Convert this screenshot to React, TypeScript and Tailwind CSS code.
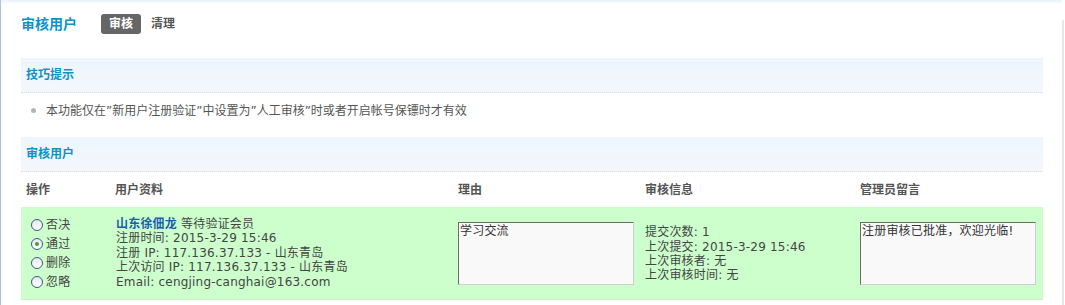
const FONT = "font-['DejaVu_Sans','Noto_Sans_CJK_SC',sans-serif]";

const columns = [
  { title: '操作', width: 'w-[89px]' },
  { title: '用户资料', width: 'w-[343px]' },
  { title: '理由', width: 'w-[187px]' },
  { title: '审核信息', width: 'w-[215px]' },
  { title: '管理员留言', width: 'flex-1' },
];

const actions = [
  { label: '否决', checked: false },
  { label: '通过', checked: true },
  { label: '删除', checked: false },
  { label: '忽略', checked: false },
];

const Radio = ({ checked }: { checked: boolean }) => (
  <span className="flex h-[12px] w-[12px] items-center justify-center rounded-full border border-[#3b5a80] bg-gradient-to-b from-[#e6e9ee] to-white">
    {checked && <span className="h-[4px] w-[4px] rounded-full bg-[#3aa33a]" />}
  </span>
);

const SectionHeader = ({ title }: { title: string }) => (
  <div className="flex h-[35px] items-center border-b border-dotted border-[#d6dfe8] bg-gradient-to-b from-[#edf5fd] to-[#f3f8fd] pl-[5px]">
    <h3 className="text-[12px] font-bold text-[#0a94c9]">{title}</h3>
  </div>
);

const TextBox = ({ value }: { value: string }) => (
  <div className="h-[63px] w-[176px] border border-t-[#6b6b6b] border-l-[#6b6b6b] border-r-[#cfcfcf] border-b-[#cfcfcf] bg-[#f9f9f9] px-[1px] pt-[1px] text-[12px] leading-[15px] text-[#333]">
    {value}
  </div>
);

export default function App() {
  return (
    <div className={`${FONT} flex h-[305px] w-[1065px] overflow-hidden border-l border-[#a9c6d5] bg-white text-[12px] text-[#444]`}>
      <div className="flex w-[1061px] flex-col bg-gradient-to-b from-[#e9f2fb] via-white to-white bg-[length:100%_8px] bg-no-repeat pl-[20px]">
        {/* title row */}
        <div className="flex h-[20px] items-center mt-[14px]">
          <h1 className="w-[80px] text-[14px] font-bold leading-[20px] text-[#0a94c9]">审核用户</h1>
          <span className="flex h-[20px] w-[40px] items-center justify-center rounded-[3px] bg-[#666] text-[12px] font-bold text-white">
            审核
          </span>
          <span className="ml-[10px] text-[12px] font-bold text-[#555]">清理</span>
        </div>

        <div className="mt-[24px] w-[1022px]">
          <SectionHeader title="技巧提示" />
          <div className="flex h-[35px] items-center pl-[10px] text-[#555]">
            <span className="mr-[10px] h-[5px] w-[5px] rounded-full bg-[#b5b5b5]" />
            本功能仅在”新用户注册验证”中设置为”人工审核”时或者开启帐号保镖时才有效
          </div>

          <div className="mt-[9px]">
            <SectionHeader title="审核用户" />
          </div>

          {/* header row */}
          <div className="flex h-[35px] items-center font-bold text-[#555]">
            {columns.map((c) => (
              <div key={c.title} className={`${c.width} pl-[5px]`}>
                {c.title}
              </div>
            ))}
          </div>

          {/* data row */}
          <div className="flex h-[93px] items-center border-b border-dotted border-[#c9e6c9] bg-[#ccffcc] tracking-[0.2px]">
            <div className="flex w-[89px] flex-col gap-[7px] pl-[10px] pt-[1px]">
              {actions.map((a) => (
                <label key={a.label} className="flex h-[12px] items-center gap-[3px] leading-[12px]">
                  <Radio checked={a.checked} />
                  {a.label}
                </label>
              ))}
            </div>
            <div className="w-[343px] pl-[6px] leading-[14.4px]">
              <p>
                <a className="font-bold text-[#1760ac]">山东徐佃龙</a> 等待验证会员
              </p>
              <p>注册时间: 2015-3-29 15:46</p>
              <p>注册 IP: 117.136.37.133 - 山东青岛</p>
              <p>上次访问 IP: 117.136.37.133 - 山东青岛</p>
              <p>Email: cengjing-canghai@163.com</p>
            </div>
            <div className="w-[187px] pl-[5px]">
              <TextBox value="学习交流" />
            </div>
            <div className="w-[215px] pl-[5px] pt-[2px] leading-[14.4px]">
              <p>提交次数: 1</p>
              <p>上次提交: 2015-3-29 15:46</p>
              <p>上次审核者: 无</p>
              <p>上次审核时间: 无</p>
            </div>
            <div className="flex-1 pl-[5px]">
              <TextBox value="注册审核已批准，欢迎光临!" />
            </div>
          </div>
        </div>
      </div>
      <div className="mt-[20px] w-[3px] border-l-2 border-[#e6e6e6]" />
    </div>
  );
}
